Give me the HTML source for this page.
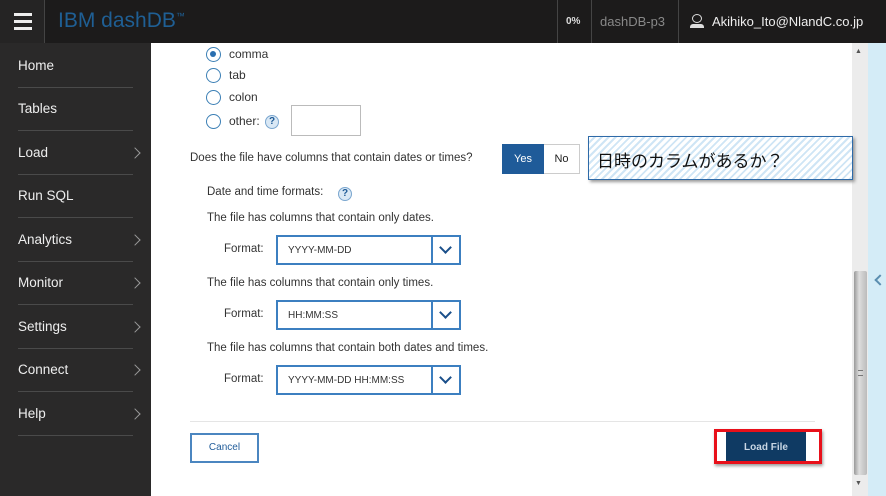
<!DOCTYPE html>
<html><head><meta charset="utf-8"><style>
*{margin:0;padding:0;box-sizing:border-box}
body{width:886px;height:496px;overflow:hidden;background:#fff;font-family:"Liberation Sans","Noto Sans CJK JP",sans-serif;position:relative;font-size:12px;color:#222}
.a{position:absolute}
#top{left:0;top:0;width:886px;height:43px;background:#1c1b1b}
#side{left:0;top:43px;width:151px;height:453px;background:#2a2929}
.nav{position:absolute;left:18px;color:#eee;font-size:13.5px}
.dv{position:absolute;left:18px;width:115px;height:1px;background:#4a4a4a}
.chev{position:absolute;left:131px;width:8px;height:8px;border-right:1.5px solid #999;border-top:1.5px solid #999;transform:rotate(45deg)}
.rad{position:absolute;left:206px;width:15px;height:15px;border:1.5px solid #3b7fb5;border-radius:50%;background:#fff}
.lab{position:absolute;font-size:12px;color:#333}
.sel{position:absolute;left:276px;width:185px;height:30px;border:2px solid #3c7fc0;background:#fff}
.sel span{position:absolute;left:10px;top:8px;font-size:10px;color:#333}
.sel i{position:absolute;right:0;top:0;width:28px;height:26px;border-left:2px solid #3c7fc0}
.sel i:after{content:"";position:absolute;left:8px;top:6px;width:7px;height:7px;border-right:2.5px solid #1a4f8a;border-bottom:2.5px solid #1a4f8a;transform:rotate(45deg)}
.q{position:absolute;width:14px;height:14px;border-radius:50%;background:#d9e8f5;border:1px solid #7aa6cf;color:#1d5a96;font-size:10px;font-weight:bold;text-align:center;line-height:12px}
</style></head><body>
<div id="top" class="a">
 <div class="a" style="left:0;top:0;width:45px;height:43px;border-right:1px solid #444;background:#252424">
  <div class="a" style="left:14px;top:13px;width:18px;height:3px;background:#eee"></div>
  <div class="a" style="left:14px;top:20px;width:18px;height:3px;background:#eee"></div>
  <div class="a" style="left:14px;top:27px;width:18px;height:3px;background:#eee"></div>
 </div>
 <div class="a" style="left:58px;top:9px;font-size:21px;color:#1f5f94">IBM dashDB<sup style="font-size:9px">™</sup></div>
 <div class="a" style="left:557px;top:0;width:1px;height:43px;background:#444"></div>
 <div class="a" style="left:566px;top:16px;font-size:10px;font-weight:bold;color:#ddd">0%</div>
 <div class="a" style="left:591px;top:0;width:1px;height:43px;background:#444"></div>
 <div class="a" style="left:600px;top:14px;font-size:13px;color:#888">dashDB-p3</div>
 <div class="a" style="left:678px;top:0;width:1px;height:43px;background:#444"></div>
 <div class="a" style="left:692px;top:14px;width:10px;height:9px;border:1.5px solid #ddd;border-radius:50%"></div>
 <div class="a" style="left:690px;top:24px;width:14px;height:4px;background:#ddd;border-radius:3px 3px 0 0"></div>
 <div class="a" style="left:712px;top:14px;font-size:13px;color:#eee">Akihiko_Ito@NlandC.co.jp</div>
</div>
<div id="side" class="a">
 <div class="nav" style="top:15px">Home</div><div class="dv" style="top:44px"></div>
 <div class="nav" style="top:58px">Tables</div><div class="dv" style="top:87px"></div>
 <div class="nav" style="top:102px">Load</div><div class="chev" style="top:106px"></div><div class="dv" style="top:131px"></div>
 <div class="nav" style="top:145px">Run SQL</div><div class="dv" style="top:174px"></div>
 <div class="nav" style="top:189px">Analytics</div><div class="chev" style="top:193px"></div><div class="dv" style="top:218px"></div>
 <div class="nav" style="top:232px">Monitor</div><div class="chev" style="top:236px"></div><div class="dv" style="top:261px"></div>
 <div class="nav" style="top:276px">Settings</div><div class="chev" style="top:280px"></div><div class="dv" style="top:305px"></div>
 <div class="nav" style="top:319px">Connect</div><div class="chev" style="top:323px"></div><div class="dv" style="top:348px"></div>
 <div class="nav" style="top:363px">Help</div><div class="chev" style="top:367px"></div><div class="dv" style="top:392px"></div>
</div>
<div class="rad" style="top:47px"><div class="a" style="left:3px;top:3px;width:6px;height:6px;border-radius:50%;background:#2a6fb0"></div></div>
<div class="lab" style="left:229px;top:47px">comma</div>
<div class="rad" style="top:68px"></div><div class="lab" style="left:229px;top:68px">tab</div>
<div class="rad" style="top:90px"></div><div class="lab" style="left:229px;top:90px">colon</div>
<div class="rad" style="top:114px"></div><div class="lab" style="left:229px;top:114px">other:</div>
<div class="q" style="left:265px;top:115px">?</div>
<div class="a" style="left:291px;top:105px;width:70px;height:31px;border:1px solid #bbb"></div>
<div class="lab" style="left:190px;top:152px;font-size:11.5px">Does the file have columns that contain dates or times?</div>
<div class="a" style="left:502px;top:144px;width:42px;height:30px;background:#1f5b99;color:#fff;font-size:11px;text-align:center;line-height:30px">Yes</div>
<div class="a" style="left:544px;top:144px;width:36px;height:30px;border:1px solid #ccc;border-left:none;font-size:11px;text-align:center;line-height:28px">No</div>
<!-- scrollbar -->
<div class="a" style="left:852px;top:43px;width:16px;height:453px;background:#ececec"></div>
<div class="a" style="left:855px;top:48px;font-size:7px;color:#555">▲</div>
<div class="a" style="left:854px;top:271px;width:13px;height:204px;background:linear-gradient(90deg,#999,#ddd 40%,#bbb);border-radius:2px"></div>
<div class="a" style="left:858px;top:370px;width:5px;height:6px;border-top:1px solid #777;border-bottom:1px solid #777"></div>
<div class="a" style="left:855px;top:480px;font-size:7px;color:#555">▼</div>
<div class="a" style="left:868px;top:43px;width:18px;height:453px;background:#d4ecf7"></div>
<div class="a" style="left:876px;top:276px;width:8px;height:8px;border-left:2px solid #5b8eb0;border-bottom:2px solid #5b8eb0;transform:rotate(45deg)"></div>
<!-- callout -->
<div class="a" style="left:588px;top:136px;width:265px;height:44px;border:1.5px solid #2e6aa8;box-shadow:2px 2px 3px #999;background:repeating-linear-gradient(135deg,#fff 0 3px,#cfe5f5 3px 5px)"></div>
<div class="a" style="left:597px;top:147px;font-size:17px;color:#111">日時のカラムがあるか？</div>
<div class="lab" style="left:207px;top:186px;font-size:11.5px">Date and time formats:</div>
<div class="q" style="left:338px;top:187px">?</div>
<div class="lab" style="left:207px;top:212px;font-size:11.5px">The file has columns that contain only dates.</div>
<div class="lab" style="left:224px;top:243px;font-size:11.5px">Format:</div>
<div class="sel" style="top:235px"><span>YYYY-MM-DD</span><i></i></div>
<div class="lab" style="left:207px;top:277px;font-size:11.5px">The file has columns that contain only times.</div>
<div class="lab" style="left:224px;top:308px;font-size:11.5px">Format:</div>
<div class="sel" style="top:300px"><span>HH:MM:SS</span><i></i></div>
<div class="lab" style="left:207px;top:342px;font-size:11.5px">The file has columns that contain both dates and times.</div>
<div class="lab" style="left:224px;top:373px;font-size:11.5px">Format:</div>
<div class="sel" style="top:365px"><span>YYYY-MM-DD HH:MM:SS</span><i></i></div>
<div class="a" style="left:190px;top:421px;width:625px;height:1px;background:#e5e5e5"></div>
<div class="a" style="left:190px;top:433px;width:69px;height:30px;border:2px solid #4b86c0;color:#1f5b99;font-size:10px;text-align:center;line-height:26px">Cancel</div>
<div class="a" style="left:714px;top:429px;width:108px;height:35px;border:3px solid #e8101a;box-shadow:1px 2px 3px #999"></div>
<div class="a" style="left:726px;top:432px;width:80px;height:29px;background:#0f3a63;color:#c8d6e4;font-size:10px;font-weight:bold;text-align:center;line-height:31px">Load File</div>
</body></html>
